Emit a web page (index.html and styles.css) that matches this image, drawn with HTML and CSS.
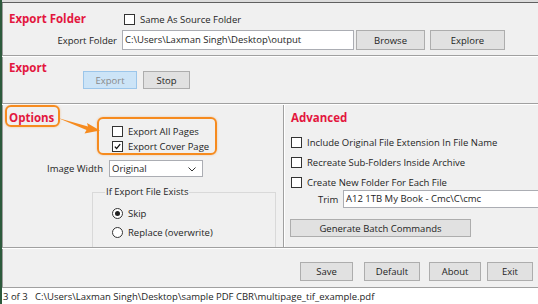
FILE: index.html
```html
<!DOCTYPE html>
<html lang="en">
<head>
<meta charset="UTF-8">
<title>Export Settings</title>
<link rel="stylesheet" href="styles.css">
</head>
<body>
<div class="app">
<div class="topline"></div>

<div class="folder">
<div class="row">
<h2 class="title folder-title">Export Folder</h2>
<label class="check"><span class="box"></span>Same As Source Folder</label>
</div>
<div class="row row2">
<span class="field-label folder-label">Export Folder</span>
<div class="textbox path">C:\Users\Laxman Singh\Desktop\output</div>
<button class="btn browse">Browse</button>
<button class="btn explore">Explore</button>
</div>
</div>
<div class="sep"></div>

<div class="export">
<h2 class="title export-title">Export</h2>
<button class="btn btn-active export-btn">Export</button>
<button class="btn stop-btn">Stop</button>
</div>
<div class="sep"></div>

<div class="main">
<div class="options">
<h2 class="title">Options</h2>
<div class="checks">
<label class="check"><span class="box"></span>Export All Pages</label>
<label class="check"><span class="box checked"><svg viewBox="0 0 11 11"><path d="M2.2 5.6 L4.4 8 L8.8 2.6" fill="none" stroke="#111" stroke-width="1.6"/></svg></span>Export Cover Page</label>
</div>
<div class="row width-row">
<span class="field-label width-label">Image Width</span>
<div class="select">Original<svg class="chev" viewBox="0 0 8 5"><path d="M0.5 0.5 L4 4 L7.5 0.5" fill="none" stroke="#333" stroke-width="1"/></svg></div>
</div>
<div class="group">
<span class="legend">If Export File Exists</span>
<label class="radio"><span class="dot on"></span>Skip</label>
<label class="radio"><span class="dot"></span>Replace (overwrite)</label>
</div>

<div class="mark mark-options"></div>
<div class="mark mark-checks"></div>
<svg class="arrow" viewBox="0 0 44 20"><path d="M0 2 L30 10.5 L29 7 L42 14.5 L26.5 17.5 L28.5 14 Z" fill="#f68b1f"/></svg>
</div>
<div class="vsep"></div>
<div class="advanced">
<h2 class="title">Advanced</h2>
<label class="check arow"><span class="box"></span>Include Original File Extension In File Name</label>
<label class="check arow"><span class="box"></span>Recreate Sub-Folders Inside Archive</label>
<label class="check arow"><span class="box"></span>Create New Folder For Each File</label>
<div class="row trim-row">
<span class="trim-label">Trim</span>
<div class="textbox trim">A12 1TB My Book - Cmc\C\cmc</div>
</div>
<button class="btn batch">Generate Batch Commands</button>
</div>
</div>
<div class="sep"></div>

<div class="footer">
<button class="btn save">Save</button>
<button class="btn default">Default</button>
<button class="btn about">About</button>
<button class="btn exit">Exit</button>
</div>
<div class="sep"></div>

<div class="status">3 of 3   C:\Users\Laxman Singh\Desktop\sample PDF CBR\multipage_tif_example.pdf</div>
</div>
</body>
</html>
```

FILE: styles.css
```css
body {
    margin: 0;
    width: 538px;
    height: 304px;
    overflow: hidden;
    font-family: 'Open Sans', 'Noto Sans', sans-serif;
    font-size: 9.5px;
    color: #1e1e1e;
    background-color: #f0f0f0;
}
.app {
    position: relative;
    height: 304px;
    display: flex;
    flex-direction: column;
    border-left: 2px solid #2d5a3c;
    box-shadow: inset 1px 0 0 #9c9c9c;
}
.topline {
    height: 2px;
    background-color: #dcdcdc;
    border-bottom: 1px solid #606060;
}
.sep {
    flex: none;
    border-top: 1px solid #a0a0a0;
    border-bottom: 1px solid #fff;
}
.row {
    display: flex;
    align-items: center;
}
.title {
    margin: 0;
    font-size: 11.5px;
    line-height: 16px;
    font-weight: 700;
    color: #e3173e;
}
.field-label {
    text-align: right;
    margin-right: 5px;
}

/* checkbox + radio */
.check, .radio {
    display: flex;
    align-items: center;
    gap: 5px;
    white-space: nowrap;
}
.box {
    width: 11px;
    height: 11px;
    box-sizing: border-box;
    border: 1px solid #333;
    background-color: #fff;
    flex: none;
}
.box svg {
    display: block;
    width: 9px;
    height: 9px;
}
.dot {
    position: relative;
    width: 11px;
    height: 11px;
    box-sizing: border-box;
    border: 1px solid #333;
    border-radius: 50%;
    background-color: #fff;
    flex: none;
}
.dot.on::after {
    content: '';
    position: absolute;
    left: 2px;
    top: 2px;
    width: 5px;
    height: 5px;
    border-radius: 50%;
    background-color: #222;
}

/* inputs + buttons */
.textbox, .select {
    height: 20px;
    box-sizing: border-box;
    border: 1px solid #abadb3;
    background-color: #fff;
    padding: 0 2px;
    line-height: 18px;
    white-space: nowrap;
    overflow: hidden;
}
.btn {
    height: 20px;
    padding: 0;
    box-sizing: border-box;
    border: 1px solid #adadad;
    background-color: #e1e1e1;
    font-family: inherit;
    font-size: 9.5px;
    color: #1e1e1e;
}
.btn-active {
    background-color: #cce4f7;
    border-color: #9cc6ea;
    color: #8a8a8a;
}

/* export folder */
.folder {
    height: 52px;
    box-sizing: border-box;
    padding: 6px 0 0 7px;
}
.folder .row {
    height: 20px;
}
.folder-title {
    width: 115px;
}
.row2 {
    margin-top: 1px;
}
.folder-label {
    width: 108px;
}
.path {
    width: 232px;
}
.browse {
    width: 69px;
    margin-left: 2px;
}
.explore {
    width: 75px;
    margin-left: 5px;
}

/* export */
.export {
    height: 46px;
    box-sizing: border-box;
    display: flex;
    align-items: flex-start;
    padding: 3px 0 0 7px;
}
.export-title {
    width: 74px;
}
.export-btn {
    width: 54px;
    height: 18px;
    margin-top: 11px;
}
.stop-btn {
    width: 47px;
    height: 18px;
    margin-top: 11px;
    margin-left: 6px;
}

/* options + advanced */
.main {
    height: 142px;
    display: grid;
    grid-template-columns: 281px 2px 1fr;
}
.vsep {
    border-left: 1px solid #a0a0a0;
    border-right: 1px solid #fff;
}
.options {
    position: relative;
    padding: 5px 0 0 7px;
}
.checks {
    margin: -2px 0 0 103px;
}
.checks .check {
    height: 15px;
}
.width-row {
    margin-top: 6px;
}
.width-label {
    width: 94px;
    margin-right: 6px;
}
.select {
    width: 94px;
    height: 17px;
    line-height: 15px;
    position: relative;
}
.chev {
    position: absolute;
    right: 6px;
    top: 6px;
    width: 8px;
    height: 5px;
}
.group {
    width: 184px;
    height: 55px;
    box-sizing: border-box;
    margin: 15px 0 0 83px;
    border: 1px solid #d9d9d9;
    border-bottom: 0;
}
.legend {
    display: table;
    margin: -8px 0 0 12px;
    padding: 0 1px;
    line-height: 14px;
    background-color: #f0f0f0;
}
.radio {
    height: 19px;
    margin-left: 19px;
}
.group .radio:first-of-type {
    margin-top: 5px;
}

.advanced {
    padding: 5px 0 0 6px;
}
.arow {
    height: 20px;
}
.advanced .title {
    margin-bottom: 6px;
}
.trim-row {
    margin-top: -2px;
}
.trim-label {
    width: 25px;
    margin-left: 27px;
}
.trim {
    width: 220px;
    height: 18px;
    line-height: 16px;
    flex: none;
}
.batch {
    display: block;
    width: 181px;
    height: 18px;
    margin: 11px 0 0 -1px;
}

/* annotation marks */
.mark {
    position: absolute;
    border: 2px solid #f68b1f;
    border-radius: 6px;
    box-shadow: 0 0 2px rgba(246, 139, 31, 0.5);
}
.mark-options {
    left: 3px;
    top: 0;
    width: 51px;
    height: 18px;
}
.mark-checks {
    left: 95px;
    top: 12px;
    width: 116px;
    height: 34px;
}
.arrow {
    position: absolute;
    left: 56px;
    top: 11px;
    width: 44px;
    height: 20px;
}

/* footer */
.footer {
    height: 38px;
    box-sizing: border-box;
    display: flex;
    align-items: flex-start;
    padding: 13px 0 0 298px;
}
.footer .btn {
    height: 19px;
}
.save {
    width: 53px;
}
.default {
    width: 56px;
    margin-left: 11px;
}
.about {
    width: 52px;
    margin-left: 9px;
}
.exit {
    width: 46px;
    margin-left: 6px;
}
.status {
    flex: 1;
    background-color: #fff;
    padding: 1px 0 0 1px;
    line-height: 13px;
    white-space: pre;
}
```
